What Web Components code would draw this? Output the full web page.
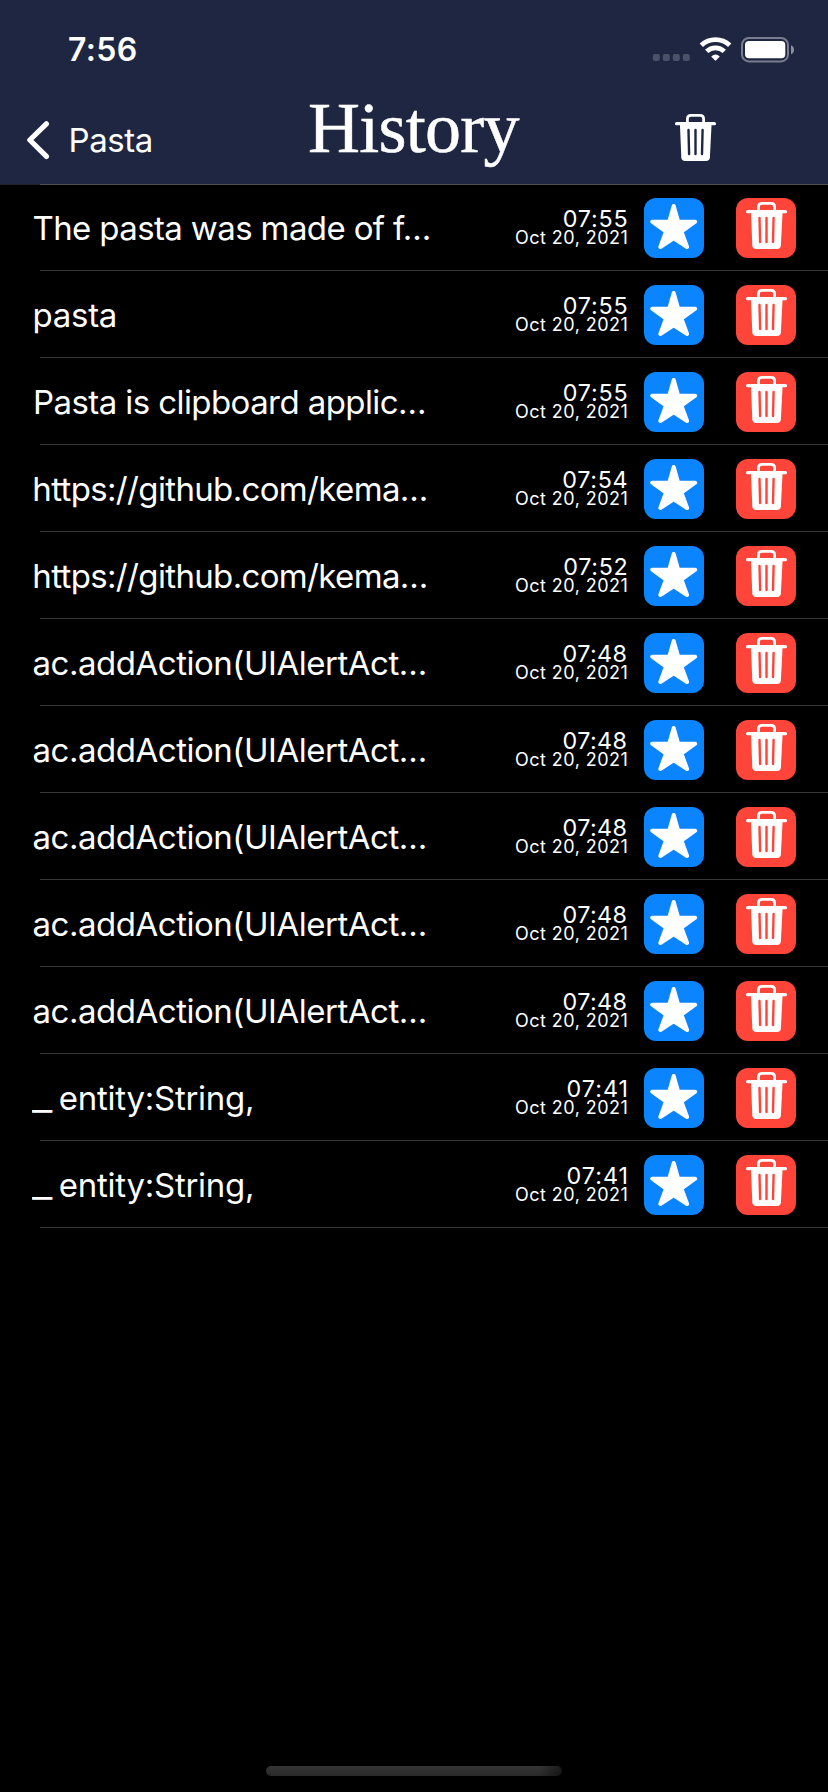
<!DOCTYPE html>
<html lang="en">
<head>
<meta charset="utf-8">
<title>History</title>
<style>
html, body { margin: 0; background: #000; }
body { font-family: Inter, "Liberation Sans", sans-serif; color: #fff; }
</style>
</head>
<body>
<history-screen></history-screen>
<script>
class BaseElement extends HTMLElement {
  render(html) {
    if (!this.shadowRoot) this.attachShadow({ mode: 'open' });
    this.shadowRoot.innerHTML = html;
  }
}

/* A single line of text tracked so its ink spans exactly `width` pixels. */
class TrackedText extends BaseElement {
  connectedCallback() {
    const width = parseFloat(this.getAttribute('width'));
    this.render(`<style>
      :host { display: block; width: ${width}px; white-space: pre; flex: none; }
      span { display: inline-block; }
      i { display: inline-block; font-style: normal; transform: scaleX(1.35); transform-origin: 0 0; margin-right: 3px; }
    </style><span></span>`);
    const span = this.shadowRoot.querySelector('span');
    const text = this.getAttribute('text');
    const wideLead = text[0] === '_';
    if (wideLead) {
      const lead = document.createElement('i');
      lead.textContent = '_';
      span.append(lead, text.slice(1));
    } else {
      span.textContent = text;
    }
    const cs = getComputedStyle(this);
    const ctx = document.createElement('canvas').getContext('2d');
    ctx.font = `${cs.fontWeight} ${cs.fontSize} ${cs.fontFamily}`;
    const m = ctx.measureText(text);
    const ink = m.actualBoundingBoxLeft + m.actualBoundingBoxRight + (wideLead ? 3 : 0);
    span.style.letterSpacing = (width - ink) / (text.length - 1) + 'px';
    span.style.marginLeft = m.actualBoundingBoxLeft + 'px';
  }
}
customElements.define('tracked-text', TrackedText);

class TrashIcon extends BaseElement {
  connectedCallback() {
    this.render(`<style>
      :host { display: block; width: 41px; height: 47px; }
      svg { display: block; }
      .slot { stroke: var(--slot, #1f2641); }
    </style>
    <svg width="41" height="47" viewBox="0 0 41 47" fill="none">
      <path d="M12.4 10V4.9Q12.4 1.4 15.9 1.4H25.1Q28.6 1.4 28.6 4.9V10" stroke="#fff" stroke-width="2.8"/>
      <rect x="0" y="8.1" width="41" height="3.1" rx="1.5" fill="#fff"/>
      <path d="M4.9 9.5H36.6L34.9 43.2Q34.7 47 31 47H10.2Q6.5 47 6.3 43.2Z" fill="#fff"/>
      <path class="slot" d="M13.5 16L14.1 40M20.5 16V40M27.6 16L27 40" stroke-width="2.4" stroke-linecap="round"/>
    </svg>`);
  }
}
customElements.define('trash-icon', TrashIcon);

class StarIcon extends BaseElement {
  connectedCallback() {
    this.render(`<style>:host, svg { display: block; }</style>
    <svg width="60" height="60" viewBox="0 0 60 60">
      <path d="M29.7 8L34.2 23.7H51.2L37.4 33.5L43.1 49L29.7 40.4L16.3 49L22 33.5L8.2 23.7H25.2Z"
        fill="#fff" stroke="#fff" stroke-width="4" stroke-linejoin="round"/>
    </svg>`);
  }
}
customElements.define('star-icon', StarIcon);

class TileButton extends BaseElement {
  connectedCallback() {
    this.render(`<style>
      :host { display: flex; justify-content: center; box-sizing: border-box; width: 60px; height: 60px; border-radius: 12px; background: var(--tile); flex: none; }
      :host([kind=star]) { --tile: #0a84ff; }
      :host([kind=trash]) { --tile: #ff453a; --slot: #ff453a; padding-top: 4px; }
    </style><slot></slot>`);
  }
}
customElements.define('tile-button', TileButton);

class StatusBar extends BaseElement {
  connectedCallback() {
    this.render(`<style>
      :host { display: flex; justify-content: space-between; height: 88px; padding: 0 34px 0 69px; box-sizing: border-box; }
      tracked-text { font-size: 32px; font-weight: 600; line-height: 100px; }
      .right { display: flex; padding-top: 37px; }
      svg { display: block; }
    </style>
    <tracked-text text="7:56" width="66.7"></tracked-text>
    <div class="right">
      <svg width="142" height="26" viewBox="0 0 142 26">
        <g fill="#4b5167">
          <rect x=".8" y="17" width="7" height="7" rx="2"/><rect x="10.8" y="17" width="7" height="7" rx="2"/>
          <rect x="20.8" y="17" width="7" height="7" rx="2"/><rect x="30.8" y="17" width="7" height="7" rx="2"/>
        </g>
        <g fill="none" stroke="#fff" stroke-width="4.8">
          <path d="M49.3 8.2A20.7 20.7 0 0 1 77.7 8.2"/>
          <path d="M54.7 14.4A12.6 12.6 0 0 1 72.3 14.4"/>
        </g>
        <path d="M59.2 19.4Q63.5 15.4 67.8 19.4L64.2 23.3Q63.5 24 62.8 23.3Z" fill="#fff"/>
        <rect x="90" y="1" width="46" height="23.4" rx="7" fill="none" stroke="#797d8d" stroke-width="2"/>
        <rect x="93" y="4" width="40.3" height="17.2" rx="4" fill="#fff"/>
        <path d="M139 8.2Q142 9.6 142 12.7T139 17.2Z" fill="#8d909e"/>
      </svg>
    </div>`);
  }
}
customElements.define('status-bar', StatusBar);

class NavBar extends BaseElement {
  connectedCallback() {
    this.render(`<style>
      :host { display: grid; grid-template-columns: 310px 365px 1fr; height: 96px; }
      .back { display: flex; padding-left: 26px; }
      .back svg { margin-top: 32px; }
      .back tracked-text { font-size: 33px; line-height: 104px; margin-left: 20.5px; }
      .title { font-family: "Liberation Serif", serif; font-size: 72px; line-height: 84px; height: 96px; margin-top: -2px; -webkit-text-stroke: .5px #fff; }
      trash-icon { margin-top: 26px; }
    </style>
    <div class="back">
      <svg width="24" height="40" viewBox="0 0 24 40" fill="none" stroke="#fff" stroke-width="5.2" stroke-linecap="round" stroke-linejoin="round"><path d="M20.4 3.8L3.8 20L20.4 36.4"/></svg>
      <tracked-text text="Pasta" width="80.3"></tracked-text>
    </div>
    <tracked-text class="title" text="History" width="209.5"></tracked-text>
    <trash-icon></trash-icon>`);
  }
}
customElements.define('nav-bar', NavBar);

class HistoryRow extends BaseElement {
  connectedCallback() {
    const a = n => this.getAttribute(n);
    this.render(`<style>
      :host { display: grid; grid-template-columns: 515.5px 111px 77.5px 109.5px; height: 87px; box-sizing: border-box;
        background: linear-gradient(#363638, #363638) 40px 86px / 788px 1px no-repeat; }
      .text { font-size: 33px; line-height: 88px; margin-left: ${a('x')}px; }
      .stamp { display: flex; flex-direction: column; align-items: flex-end; }
      .time { font-size: 23.3px; line-height: 24px; margin-top: 23px; }
      .date { font-size: 18px; line-height: 14px; }
      tile-button { margin-top: 14px; justify-self: end; }
    </style>
    <tracked-text class="text" text="${a('text')}" width="${a('w')}"></tracked-text>
    <div class="stamp">
      <tracked-text class="time" text="${a('time')}" width="${a('tw')}"></tracked-text>
      <tracked-text class="date" text="Oct 20, 2021" width="110.5"></tracked-text>
    </div>
    <tile-button kind="star"><star-icon></star-icon></tile-button>
    <tile-button kind="trash"><trash-icon></trash-icon></tile-button>`);
    this.shadowRoot.querySelector('[kind=trash]').style.marginRight = '17.5px';
  }
}
customElements.define('history-row', HistoryRow);

class HistoryScreen extends BaseElement {
  connectedCallback() {
    const action = ['ac.addAction(UIAlertAct…', 33.5, 391.3, '07:48', 63];
    const github = 'https://github.com/kema…';
    const rows = [
      ['The pasta was made of f…', 33.5, 395.3, '07:55', 62.7],
      ['pasta', 34.5, 80.3, '07:55', 62.7],
      ['Pasta is clipboard applic…', 35, 389, '07:55', 62.7],
      [github, 34.3, 391.5, '07:54', 63.2],
      [github, 34.3, 391.5, '07:52', 62.3],
      action, action, action, action, action,
      ['_ entity:String,', 32, 220, '07:41', 59],
      ['_ entity:String,', 32, 220, '07:41', 59],
    ];
    this.render(`<style>
      :host { display: flex; flex-direction: column; width: 828px; height: 1792px; background: #000; overflow: hidden; }
      header { background: #1f2641; height: 184px; flex: none; }
      main { flex: 1; background: linear-gradient(90deg, #222328 40px, #515154 40px) 0 0 / 828px 1px no-repeat; }
      .home { width: 296px; height: 10px; border-radius: 5px; margin: 0 auto 16px; flex: none;
        background: linear-gradient(100deg, transparent 92%, #0008), linear-gradient(#353535, #292929); }
    </style>
    <header><status-bar></status-bar><nav-bar></nav-bar></header>
    <main>${rows.map(([t, x, w, time, tw]) =>
      `<history-row text="${t}" x="${x}" w="${w}" time="${time}" tw="${tw}"></history-row>`).join('')}</main>
    <div class="home"></div>`);
  }
}
customElements.define('history-screen', HistoryScreen);
</script>
</body>
</html>
